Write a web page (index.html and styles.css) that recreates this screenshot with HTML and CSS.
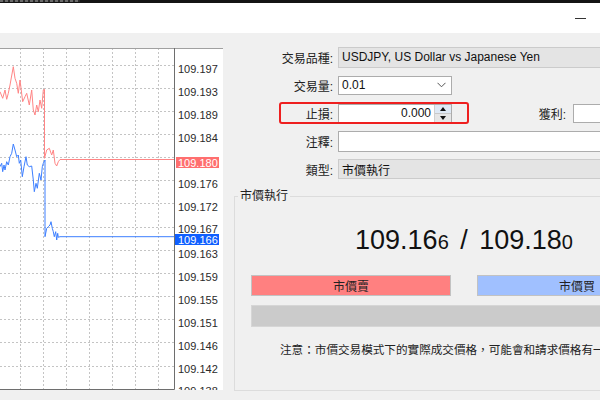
FILE: index.html
```html
<!DOCTYPE html>
<html>
<head>
<meta charset="utf-8">
<link rel="stylesheet" href="styles.css">
</head>
<body>
<div class="topstrip"><span class="strip-glimpse"></span></div>
<div class="titlebar"><span class="minimize"></span></div>
<div class="main">
  <div class="chart">
    <svg width="223" height="342" viewBox="0 0 223 342" xmlns="http://www.w3.org/2000/svg">
      <rect x="0" y="0" width="223" height="342" fill="#ffffff"/>
      <g class="grid">
        <line x1="0" y1="17.5" x2="174" y2="17.5"/>
        <line x1="0" y1="40.5" x2="174" y2="40.5"/>
        <line x1="0" y1="63.5" x2="174" y2="63.5"/>
        <line x1="0" y1="86.5" x2="174" y2="86.5"/>
        <line x1="0" y1="109.5" x2="174" y2="109.5"/>
        <line x1="0" y1="132.5" x2="174" y2="132.5"/>
        <line x1="0" y1="155.5" x2="174" y2="155.5"/>
        <line x1="0" y1="179.5" x2="174" y2="179.5"/>
        <line x1="0" y1="202.5" x2="174" y2="202.5"/>
        <line x1="0" y1="225.5" x2="174" y2="225.5"/>
        <line x1="0" y1="248.5" x2="174" y2="248.5"/>
        <line x1="0" y1="271.5" x2="174" y2="271.5"/>
        <line x1="0" y1="294.5" x2="174" y2="294.5"/>
        <line x1="0" y1="318.5" x2="174" y2="318.5"/>
        <line x1="20.5" y1="0" x2="20.5" y2="341"/>
        <line x1="43.5" y1="0" x2="43.5" y2="341"/>
        <line x1="66.5" y1="0" x2="66.5" y2="341"/>
        <line x1="89.5" y1="0" x2="89.5" y2="341"/>
        <line x1="112.5" y1="0" x2="112.5" y2="341"/>
        <line x1="135.5" y1="0" x2="135.5" y2="341"/>
        <line x1="158.5" y1="0" x2="158.5" y2="341"/>
      </g>
      <polyline class="ask" points="0,43.7 2.7,50.3 5,42 6.7,51.3 8.3,45.3 10,37 13.3,18.7 15,30.3 16.7,35.3 18.3,45.3 20,32 22.7,53.7 25,48.7 26.7,45.3 29.3,57 31.7,42 33.3,62 35,67 36.7,57 38.3,63.7 40,52 41.7,60.3 43.3,42 44.5,41.3 44.5,110.3 46.7,102 49.3,100.3 51.7,107 53.3,102 55,115.3 56.7,118 58.3,113.7 60,111.5 174,111.5"/>
      <polyline class="bid" points="0,118.7 1.7,115.3 2.7,123.7 4,117 5,122 6.7,113.7 8.3,117 10,108.7 11.7,105.3 13.3,96 15,102 16.7,108.7 18.3,107 19.3,115.3 20.7,112 22.3,128.7 24,118.7 26,108.7 27.3,117 29.3,118.7 31.7,118 33.3,132 34.3,143.7 36,135.3 37.3,140.3 39.3,125.3 41,132 42.3,118.7 43.3,115.3 45,112 45,188.7 46.7,180.3 48.3,178.7 50,177 51,173.7 52.3,180.3 53.3,183.7 54.3,188.7 55.7,183.7 56.7,192 57.7,185.3 58.3,189.3 60,188.7 174,188.7"/>
      <line class="frame" x1="0" y1="0.5" x2="223" y2="0.5"/>
      <line class="plotedge" x1="174.5" y1="0" x2="174.5" y2="341.5"/>
      <line class="plotedge" x1="0" y1="341.5" x2="174.5" y2="341.5"/>
      <g class="axis">
        <text x="178" y="25">109.197</text>
        <text x="178" y="48">109.193</text>
        <text x="178" y="71">109.189</text>
        <text x="178" y="94">109.184</text>
        <text x="178" y="140">109.176</text>
        <text x="178" y="163">109.172</text>
        <text x="178" y="185">109.167</text>
        <text x="178" y="210">109.163</text>
        <text x="178" y="233">109.159</text>
        <text x="178" y="256">109.155</text>
        <text x="178" y="279">109.151</text>
        <text x="178" y="302">109.146</text>
        <text x="178" y="325">109.142</text>
        <text x="178" y="347">109.138</text>
      </g>
      <rect class="askbox" x="176" y="109" width="43" height="11"/>
      <text class="tag" x="178" y="118.5">109.180</text>
      <rect class="bidbox" x="175" y="186" width="44" height="11"/>
      <text class="tag" x="178" y="195.5">109.166</text>
    </svg>
  </div>
  <div class="panel">
    <div class="form">
      <div class="row">
        <span class="lbl">交易品種:</span>
        <div class="field ro">USDJPY, US Dollar vs Japanese Yen</div>
      </div>
      <div class="row">
        <span class="lbl">交易量:</span>
        <div class="field combo"><span class="val-left">0.01</span>
          <svg class="chev" width="9" height="6" viewBox="0 0 9 6"><polyline points="0.5,0.8 4.5,4.8 8.5,0.8"/></svg>
        </div>
      </div>
      <div class="row">
        <span class="highlight"></span>
        <span class="lbl">止損:</span>
        <div class="field spin"><span class="val-right">0.000</span>
          <span class="spinbtns"><span class="sb up"><i class="tri-up"></i></span><span class="sb down"><i class="tri-down"></i></span></span>
        </div>
        <span class="lbl2">獲利:</span>
        <div class="field tp"></div>
      </div>
      <div class="row">
        <span class="lbl">注釋:</span>
        <div class="field comment"></div>
      </div>
      <div class="row">
        <span class="lbl">類型:</span>
        <div class="field ro type">市價執行</div>
      </div>
    </div>
    <fieldset class="group">
      <legend>市價執行</legend>
      <div class="price">109.16<span class="small">6</span> / 109.18<span class="small">0</span></div>
      <div class="buttons">
        <button class="btn sell">市價賣</button>
        <button class="btn buy">市價買</button>
      </div>
      <div class="bar"></div>
      <p class="note">注意：市價交易模式下的實際成交價格，可能會和請求價格有一</p>
    </fieldset>
  </div>
</div>
</body>
</html>
```

FILE: styles.css
```css
html, body {
  margin: 0;
  padding: 0;
}
body {
  width: 600px;
  height: 400px;
  overflow: hidden;
  background: #f0f0f0;
  font-family: "Liberation Sans", "Noto Sans CJK TC", sans-serif;
  font-size: 12px;
  color: #1a1a1a;
}

.topstrip {
  height: 3px;
  background: #141414;
  display: flex;
}
.strip-glimpse {
  width: 80px;
  height: 2px;
  background: repeating-linear-gradient(90deg, #6a6a6a 0 3px, #2a2a2a 3px 5px);
}

.titlebar {
  height: 30px;
  background: #ffffff;
  display: flex;
  align-items: center;
  justify-content: flex-end;
  padding-right: 14px;
}
.minimize {
  width: 11px;
  height: 1px;
  background: #333;
}

.main {
  display: flex;
  height: 367px;
}

.chart {
  width: 223px;
  height: 342px;
  flex-shrink: 0;
  margin-top: 15px;
  background: #fff;
}
.chart svg {
  display: block;
}
.grid line {
  stroke: #c4c4c4;
  stroke-width: 1;
  stroke-dasharray: 2 2;
}
.ask {
  fill: none;
  stroke: #ff8585;
  stroke-width: 1;
}
.bid {
  fill: none;
  stroke: #3d7fff;
  stroke-width: 1;
}
.frame {
  stroke: #a0a0a0;
  stroke-width: 1;
}
.plotedge {
  stroke: #6e6e6e;
  stroke-width: 1;
}
.axis text {
  font-family: "Liberation Sans", sans-serif;
  font-size: 11px;
  fill: #2a2a2a;
}
.askbox {
  fill: #ff6f6f;
}
.bidbox {
  fill: #0f5fff;
}
.tag {
  font-family: "Liberation Sans", sans-serif;
  font-size: 11px;
  fill: #ffffff;
}

.panel {
  width: 482px;
  flex-shrink: 0;
  padding-top: 13px;
  box-sizing: border-box;
}
.form {
  display: flex;
  flex-direction: column;
  gap: 6px;
}
.row {
  position: relative;
  display: flex;
  align-items: center;
  height: 22px;
}
.lbl {
  width: 110px;
  flex-shrink: 0;
  text-align: right;
  margin-right: 5px;
  color: #222;
}
.lbl2 {
  width: 114px;
  flex-shrink: 0;
  text-align: right;
  margin-right: 7px;
  color: #222;
}
.field {
  box-sizing: border-box;
  height: 19px;
  border: 1px solid #acacac;
  background: #fff;
  display: flex;
  align-items: center;
  padding: 0 3px;
  white-space: nowrap;
  color: #111;
}
.field.ro {
  flex: 1;
  height: 21px;
  margin-right: 11px;
  background: #e4e4e4;
  border-color: #cbcbcb;
}
.field.type {
  height: 20px;
}
.combo {
  width: 114px;
  justify-content: space-between;
}
.chev polyline {
  fill: none;
  stroke: #555;
  stroke-width: 1;
}
.chev {
  margin-right: 2px;
}
.spin {
  width: 114px;
  justify-content: flex-end;
  padding: 0;
}
.val-right {
  padding-right: 3px;
}
.spinbtns {
  width: 16px;
  height: 17px;
  display: flex;
  flex-direction: column;
  border-left: 1px solid #d0d0d0;
}
.sb {
  flex: 1;
  display: flex;
  align-items: center;
  justify-content: center;
  background: #e6e6e6;
}
.sb.up {
  background: #dfe9f5;
  border-bottom: 1px solid #c8c8c8;
}
.tri-up {
  width: 0;
  height: 0;
  border-left: 3.5px solid transparent;
  border-right: 3.5px solid transparent;
  border-bottom: 4px solid #111;
}
.tri-down {
  width: 0;
  height: 0;
  border-left: 3.5px solid transparent;
  border-right: 3.5px solid transparent;
  border-top: 4px solid #111;
}
.tp {
  flex: 1;
  margin-right: 11px;
}
.comment {
  flex: 1;
  height: 21px;
  margin-right: 11px;
}
.highlight {
  position: absolute;
  left: 56px;
  top: 0;
  width: 190px;
  height: 22px;
  box-sizing: border-box;
  border: 2px solid #ee1f1f;
  border-radius: 3px;
}

.group {
  margin: 8px 0 0 11px;
  padding: 0;
  width: 460px;
  height: 203px;
  box-sizing: border-box;
  border: 1px solid #dcdcdc;
  min-width: 0;
}
.group legend {
  margin-left: 3px;
  padding: 0 2px;
  line-height: 16px;
  color: #222;
}
.price {
  margin-top: 19px;
  height: 34px;
  line-height: 34px;
  text-align: center;
  font-family: "Liberation Sans", sans-serif;
  font-size: 27px;
  word-spacing: 4px;
  color: #111;
}
.price .small {
  font-size: 20px;
}
.buttons {
  display: flex;
  gap: 26px;
  margin: 18px 0 0 16px;
}
.btn {
  width: 200px;
  height: 21px;
  padding: 0;
  border: 1px solid #c2c2c2;
  font-family: "Liberation Sans", "Noto Sans CJK TC", sans-serif;
  font-size: 12px;
  color: #222;
}
.sell {
  background: #ff8080;
}
.buy {
  background: #a0c0ff;
}
.bar {
  margin: 9px 0 0 16px;
  width: 426px;
  height: 22px;
  box-sizing: border-box;
  background: #cbcbcb;
  border: 1px solid #d6d6d6;
}
.note {
  margin: 15px 0 0 45px;
  line-height: 16px;
  font-size: 11.6px;
  white-space: nowrap;
  color: #222;
}
```
